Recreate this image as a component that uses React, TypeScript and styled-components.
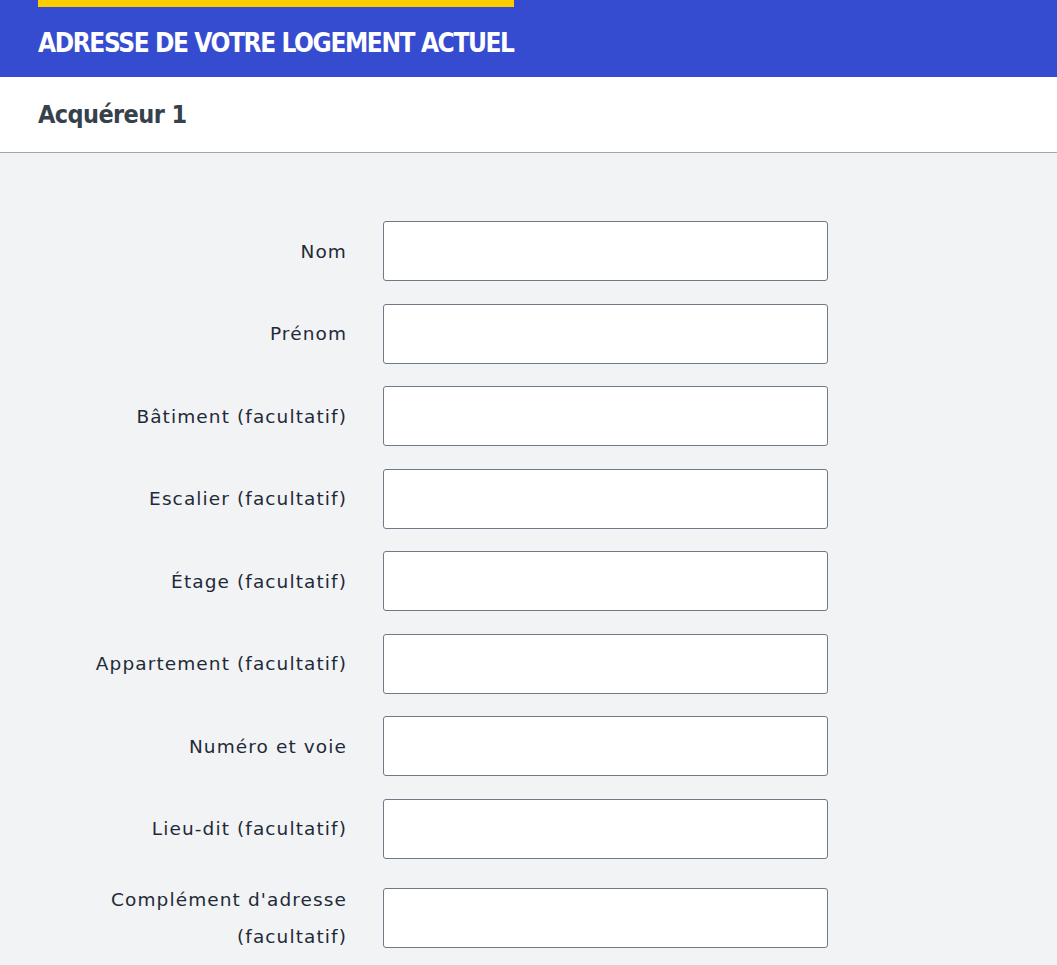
import React from "react";
import styled, { createGlobalStyle } from "styled-components";

const Global = createGlobalStyle`
  html, body { margin: 0; padding: 0; background: #f2f3f5; }
  * { box-sizing: border-box; }
`;

const Page = styled.div`
  width: 1057px;
  min-height: 965px;
  background: #f2f3f5;
`;

const Banner = styled.header`
  background: #364cd0;
  height: 77px;
  padding: 0 38px;
`;

const Title = styled.h1`
  display: inline-block;
  margin: 0;
  border-top: 7px solid #ffcc00;
  padding-top: 21px;
  font-family: "DejaVu Sans Condensed", "Liberation Sans", sans-serif;
  font-weight: 700;
  font-size: 26px;
  line-height: 30px;
  color: #ffffff;
  letter-spacing: -1.4px;
`;

const SubHeader = styled.div`
  background: #ffffff;
  height: 76px;
  border-bottom: 1px solid #a3a6aa;
  padding: 0 38px;
  display: flex;
  align-items: center;
`;

const SubTitle = styled.h2`
  margin: 0;
  font-family: "DejaVu Sans Condensed", "Liberation Sans", sans-serif;
  font-weight: 700;
  font-size: 25px;
  letter-spacing: -0.6px;
  color: #36414c;
`;

const Form = styled.form`
  padding-top: 68px;
  display: flex;
  flex-direction: column;
  gap: 22.5px;
`;

const Row = styled.div`
  display: grid;
  grid-template-columns: 347px 445px;
  column-gap: 36px;
  align-items: center;
`;

const Label = styled.label`
  text-align: right;
  font-family: "DejaVu Sans", sans-serif;
  font-size: 18.5px;
  letter-spacing: 1.1px;
  line-height: 37px;
  color: #1f2a38;
  padding-left: 60px;
`;

const Input = styled.input`
  height: 60px;
  width: 445px;
  background: #ffffff;
  border: 1px solid #6f7a86;
  border-radius: 3px;
  font-size: 18px;
  padding: 0 12px;
`;

const fields = [
  "Nom",
  "Prénom",
  "Bâtiment (facultatif)",
  "Escalier (facultatif)",
  "Étage (facultatif)",
  "Appartement (facultatif)",
  "Numéro et voie",
  "Lieu-dit (facultatif)",
  "Complément d'adresse (facultatif)",
];

export default function App() {
  return (
    <Page>
      <Global />
      <Banner>
        <Title>ADRESSE DE VOTRE LOGEMENT ACTUEL</Title>
      </Banner>
      <SubHeader>
        <SubTitle>Acquéreur 1</SubTitle>
      </SubHeader>
      <Form>
        {fields.map((f, i) => (
          <Row key={i}>
            <Label htmlFor={`f${i}`}>{f}</Label>
            <Input id={`f${i}`} type="text" />
          </Row>
        ))}
      </Form>
    </Page>
  );
}
